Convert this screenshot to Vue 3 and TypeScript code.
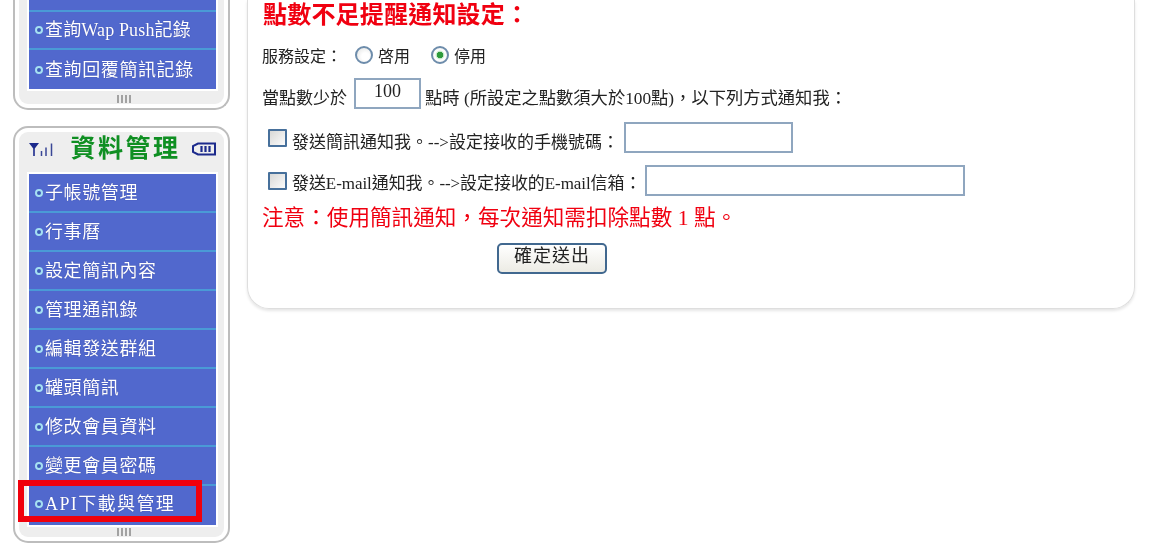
<script setup lang="ts">
interface MenuItem {
  label: string
  kind?: 'wap' | 'api'
}

const topItems: MenuItem[] = [
  { label: '查詢Wap Push記錄', kind: 'wap' },
  { label: '查詢回覆簡訊記錄' },
]
const dataItems: MenuItem[] = [
  { label: '子帳號管理' },
  { label: '行事曆' },
  { label: '設定簡訊內容' },
  { label: '管理通訊錄' },
  { label: '編輯發送群組' },
  { label: '罐頭簡訊' },
  { label: '修改會員資料' },
  { label: '變更會員密碼' },
  { label: 'API下載與管理', kind: 'api' },
]
</script>

<template>
  <div class="page">
    <aside class="sidebar">
      <section class="card card-cut">
        <div class="card-inner">
          <ul class="menu menu-cut">
            <li v-for="item in topItems" :key="item.label" class="menu-item" :class="item.kind">
              <span class="bullet" />{{ item.label }}
            </li>
          </ul>
          <div class="grip" />
        </div>
      </section>

      <section class="card">
        <div class="card-inner">
          <header class="card-head">
            <svg class="signal" width="24" height="15" viewBox="0 0 24 15" aria-hidden="true">
              <path d="M0 1h10L5.8 6.5V14H4.2V6.5z" fill="#1c2a8c" />
              <path d="M12.5 9v5M17 5.5v8.5M22.5 1.5v12.5" stroke="#3a4796" stroke-width="1.5" />
            </svg>
            <h2 class="card-title">資料管理</h2>
            <svg class="battery" width="24" height="14" viewBox="0 0 24 14" aria-hidden="true">
              <path d="M6 1.5h17v11H6L1 10V4z" fill="none" stroke="#1c2a8c" stroke-width="2" />
              <path d="M9.5 4v6M13.5 4v6M17.5 4v6" stroke="#1c2a8c" stroke-width="2.2" />
            </svg>
          </header>
          <ul class="menu">
            <li v-for="item in dataItems" :key="item.label" class="menu-item" :class="item.kind">
              <span class="bullet" />{{ item.label }}
              <span v-if="item.kind === 'api'" class="highlight" />
            </li>
          </ul>
          <div class="grip" />
        </div>
      </section>
    </aside>

    <main class="panel">
      <h1 class="panel-title">點數不足提醒通知設定：</h1>

      <div class="row row-service">
        <span>服務設定：</span>
        <span class="radio" />
        <span class="radio-label">啓用</span>
        <span class="radio radio-on" />
        <span>停用</span>
      </div>

      <div class="row row-threshold">
        <span class="label">當點數少於</span>
        <div class="field field-points">100</div>
        <span class="label label-long">點時 (所設定之點數須大於100點)，以下列方式通知我：</span>
      </div>

      <div class="row row-phone">
        <span class="check" />
        <span class="label">發送簡訊通知我。--&gt;設定接收的手機號碼：</span>
        <div class="field field-phone" />
      </div>

      <div class="row row-mail">
        <span class="check" />
        <span class="label">發送E-mail通知我。--&gt;設定接收的E-mail信箱：</span>
        <div class="field field-mail" />
      </div>

      <p class="notice">注意：使用簡訊通知，每次通知需扣除點數 1 點。</p>

      <div class="actions">
        <button class="submit" type="button">確定送出</button>
      </div>
    </main>
  </div>
</template>

<style>
html,
body {
  margin: 0;
  background: #fff;
  overflow: hidden;
}
</style>

<style scoped>
.page {
  display: flex;
  align-items: flex-start;
  width: 1155px;
  height: 554px;
  overflow: hidden;
  background: #fff;
  color: #222;
  font-family: "Liberation Serif", "Noto Sans CJK TC", serif;
  font-size: 16px;
  filter: blur(0.35px);
}

.sidebar {
  display: flex;
  flex-direction: column;
  gap: 16px;
  width: 217px;
  margin-left: 13px;
  flex: none;
}
.card {
  border: 2px solid #bdbdbd;
  border-radius: 15px;
  padding: 4px;
  background: #fff;
  box-sizing: border-box;
}
.card-cut {
  height: 110px;
  border-top: 0;
  border-top-left-radius: 0;
  border-top-right-radius: 0;
  padding-top: 0;
}
.card-inner {
  display: flex;
  flex-direction: column;
  padding: 0 8px 0 10px;
  background: #eeeeee;
  border-radius: 9px;
}
.card-cut .card-inner {
  border-top-left-radius: 0;
  border-top-right-radius: 0;
}
.card-head {
  display: flex;
  align-items: center;
  justify-content: space-between;
  height: 42px;
  padding-bottom: 8px;
  box-sizing: border-box;
}
.card-title {
  margin: 0 0 0 6px;
  color: #0f8f22;
  font-size: 25px;
  font-weight: 700;
  letter-spacing: 2.5px;
  line-height: 30px;
}
.menu {
  margin: 0;
  padding: 0;
  list-style: none;
  background: #5168cd;
  box-shadow: 0 0 0 2px #fff;
}
.menu-cut .menu-item:first-child {
  height: 50px;
  padding-top: 11px;
  background: linear-gradient(#5168cd 10px, #4a9ad6 10px, #4a9ad6 12px, #5168cd 12px);
}
.menu-item {
  position: relative;
  display: flex;
  align-items: center;
  height: 39px;
  box-sizing: border-box;
  padding-left: 6px;
  border-bottom: 2px solid #4a9ad6;
  color: #fff;
  font-size: 18px;
  letter-spacing: 0.6px;
  line-height: 1;
  white-space: pre;
  text-shadow: 0 0 1px #33409a;
}
.menu-item:last-child {
  border-bottom: 0;
}
.menu-item.wap {
  letter-spacing: 0.15px;
}
.menu-item.api {
  padding-bottom: 3px;
  letter-spacing: 1.4px;
}
.bullet {
  width: 8px;
  height: 8px;
  margin-right: 2px;
  flex: none;
  border-radius: 50%;
  box-sizing: border-box;
  border: 2px solid #a5e0f2;
  background: #3d5bb8;
}
.highlight {
  position: absolute;
  left: -11px;
  right: 14px;
  top: -6px;
  bottom: 3px;
  border: 6px solid #f0000c;
  pointer-events: none;
}
.grip {
  height: 12px;
  background:
    repeating-linear-gradient(90deg, #a2a2a2 0 2px, transparent 2px 4px) calc(50% + 2px) 3px / 16px 8px no-repeat;
}
.card-cut .grip {
  height: 15px;
  background-position: calc(50% + 2px) 6px;
}

.panel {
  width: 888px;
  height: 309px;
  margin-left: 17px;
  padding: 0 0 0 14px;
  box-sizing: border-box;
  flex: none;
  border: 1px solid #dedede;
  border-top: 0;
  border-radius: 0 0 22px 22px;
  box-shadow: 0 2px 3px rgba(0, 0, 0, 0.1);
}
.panel-title {
  margin: 0 0 0 1px;
  height: 30px;
  color: #f00010;
  font-size: 24px;
  font-weight: 700;
  letter-spacing: 0.2px;
  line-height: 31px;
}
.row {
  display: flex;
  align-items: center;
  height: 30px;
  white-space: pre;
}
.row-service {
  margin-top: 10px;
}
.row-threshold {
  margin-top: 8px;
}
.row-phone {
  margin-top: 14px;
  padding-left: 6px;
}
.row-mail {
  margin-top: 13px;
  padding-left: 6px;
}
.label {
  font-size: 17px;
  padding-top: 6px;
}
.label-long {
  font-size: 17.3px;
}
.row-mail .label {
  padding-top: 2px;
  letter-spacing: -0.07px;
}
.radio {
  width: 18px;
  height: 18px;
  margin: 0 5px 0 13px;
  flex: none;
  box-sizing: border-box;
  border: 2px solid #6d8cab;
  border-radius: 50%;
  background: radial-gradient(circle at 60% 60%, #fff 30%, #dfe0df 100%);
}
.radio-label {
  margin-right: 21px;
}
.radio-on {
  margin-left: 0;
  background: radial-gradient(circle, #2e9a3c 0 3px, #bfe6c4 3.5px, #fff 5px, #e6e6e6 100%);
}
.check {
  width: 19px;
  height: 18px;
  margin-right: 5px;
  flex: none;
  box-sizing: border-box;
  border: 2px solid #47709b;
  border-radius: 1px;
  background: linear-gradient(135deg, #d8d8d6, #fbfbfb);
}
.row-phone .check,
.row-mail .check {
  margin-top: 2px;
}
.field {
  height: 31px;
  box-sizing: border-box;
  flex: none;
  border: 2px solid #8fa6bf;
  background: #fff;
}
.field-points {
  width: 67px;
  margin: 0 4px 0 7px;
  text-align: center;
  font-size: 18px;
  line-height: 22px;
  align-self: flex-start;
}
.field-phone {
  width: 169px;
  margin-left: 5px;
}
.field-mail {
  width: 320px;
  margin-left: 4px;
}
.notice {
  margin: 10px 0 0;
  height: 25px;
  color: #f00010;
  font-size: 21.6px;
  line-height: 26px;
  white-space: pre;
}
.actions {
  margin-top: 13px;
  padding-left: 235px;
}
.submit {
  display: flex;
  justify-content: center;
  align-items: flex-start;
  width: 110px;
  height: 31px;
  padding: 0;
  border: 2px solid #41688f;
  border-radius: 5px;
  background: linear-gradient(#fff, #ecebe4);
  color: #222;
  font: inherit;
  font-size: 18px;
  line-height: 22px;
  letter-spacing: 1px;
}
</style>
